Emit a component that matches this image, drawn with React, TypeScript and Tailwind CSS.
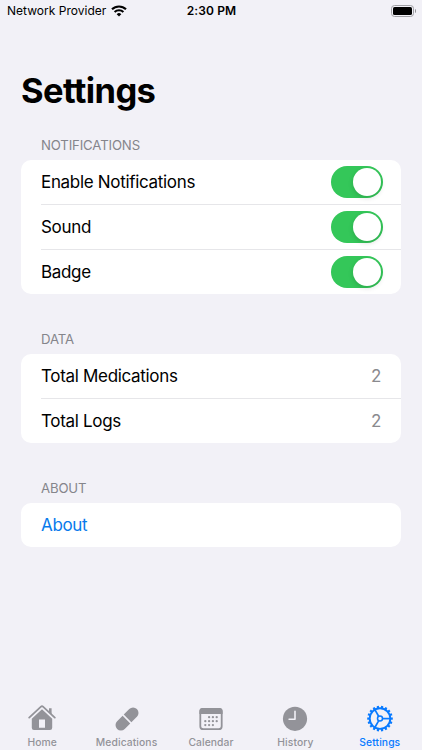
import React from "react";

type SectionProps = {
  title: string;
  className?: string;
  children: React.ReactNode;
};

const Section: React.FC<SectionProps> = ({ title, className = "", children }) => {
  return (
    <section className={className}>
      <h2 className="pl-5 h-[31px] pt-[6px] text-[13.2px] leading-[20px] tracking-[-0.15px] text-[#85858b]">
        {title}
      </h2>
      <div className="rounded-[10px] bg-white pl-5 divide-y divide-[#e6e6e9]">{children}</div>
    </section>
  );
};

type RowProps = {
  label: React.ReactNode;
  children?: React.ReactNode;
};

const Row: React.FC<RowProps> = ({ label, children }) => {
  return (
    <div className="flex h-[45px] items-center justify-between pr-[18px] text-[17px] leading-6 tracking-[-0.32px] text-black last:h-[44px]">
      <span>{label}</span>
      {children}
    </div>
  );
};

const Toggle: React.FC<{ name: string }> = ({ name }) => {
  return (
    <button
      role="switch"
      aria-checked="true"
      aria-label={name}
      className="flex h-8 w-[52px] items-center justify-end rounded-full bg-[#34c759] pr-[2px]"
    >
      <span className="h-7 w-7 rounded-full bg-white shadow-[0_2px_5px_rgba(0,0,0,0.15)]" />
    </button>
  );
};

const HomeIcon = () => (
  <svg width="28" height="28" viewBox="0 0 28 28" fill="none">
    <path d="M1.2 12.6 13 1.7q1-.9 2 0L26.8 12.6" stroke="currentColor" strokeWidth="1.8" strokeLinecap="round" strokeLinejoin="round" />
    <path d="M21 3.3h2.6v6l-2.6-2.4z" fill="currentColor" />
    <path
      d="M14 4.2 24.2 13.7v9a2.2 2.2 0 0 1-2.2 2.2H6a2.2 2.2 0 0 1-2.2-2.2v-9zM11 14.5v8.2h6v-8.2z"
      fill="currentColor"
      fillRule="evenodd"
    />
  </svg>
);

const PillIcon = () => (
  <svg width="28" height="28" viewBox="0 0 28 28" fill="currentColor">
    <g transform="rotate(-45 14 14)">
      <path d="M13.2 8.6v10.8H5.4a5.4 5.4 0 0 1 0-10.8z" />
      <path d="M14.8 8.6h7.8a5.4 5.4 0 0 1 0 10.8h-7.8z" />
    </g>
  </svg>
);

const CalendarIcon = () => (
  <svg width="28" height="28" viewBox="0 0 28 28" fill="none">
    <rect x="3.3" y="4" width="21.4" height="20.2" rx="3" stroke="currentColor" strokeWidth="1.8" />
    <path d="M2.4 9V6a3 3 0 0 1 3-3h17.2a3 3 0 0 1 3 3v3z" fill="currentColor" />
    <g fill="currentColor">
      {[
        [12.1, 12.2], [15.9, 12.2], [19.7, 12.2],
        [8.3, 16.2], [12.1, 16.2], [15.9, 16.2], [19.7, 16.2],
        [8.3, 20.1], [12.1, 20.1], [15.9, 20.1],
      ].map(([x, y]) => (
        <circle key={`${x}-${y}`} cx={x} cy={y} r="1.15" />
      ))}
    </g>
  </svg>
);

const ClockIcon = () => (
  <svg width="28" height="28" viewBox="0 0 28 28" fill="none">
    <circle cx="14" cy="13.8" r="12.1" fill="currentColor" />
    <path d="M14 6.3v7.9H8.1" stroke="#f2f1f7" strokeWidth="1.6" strokeLinecap="round" strokeLinejoin="round" />
  </svg>
);

const GearIcon = () => (
  <svg width="28" height="28" viewBox="0 0 28 28" fill="none" stroke="currentColor">
    <circle cx="14" cy="13.6" r="10.3" strokeWidth="1.9" />
    {/* Teeth */}
    {Array.from({ length: 18 }, (_, i) => (
      <path key={i} d="M14 .8v2.5" strokeWidth="2.2" transform={`rotate(${i * 20 + 10} 14 13.6)`} />
    ))}
    {/* Hub and spokes */}
    <circle cx="14" cy="13.6" r="2.5" strokeWidth="1.5" />
    {[0, 120, 240].map((deg) => (
      <path key={deg} d="M16.7 13.6h7.3" strokeWidth="1.7" transform={`rotate(${deg} 14 13.6)`} />
    ))}
  </svg>
);

const tabs = [
  { label: "Home", icon: <HomeIcon /> },
  { label: "Medications", icon: <PillIcon /> },
  { label: "Calendar", icon: <CalendarIcon /> },
  { label: "History", icon: <ClockIcon /> },
  { label: "Settings", icon: <GearIcon />, active: true },
];

const StatusBar = () => (
  <div className="grid h-[22px] grid-cols-3 items-center pl-[7px] pr-[6px] text-[12px] text-black">
    <div className="flex items-center gap-[5px] whitespace-nowrap">
      <span className="tracking-[0.02px]">Network Provider</span>
      <svg width="16" height="12" viewBox="0 0 16 12" fill="none" stroke="currentColor" strokeWidth="2.1">
        <path d="M1 4.3a10 10 0 0 1 14 0" />
        <path d="M3.6 7a6.3 6.3 0 0 1 8.8 0" />
        <path d="M8 11.5 5.7 9.2a3.3 3.3 0 0 1 4.6 0z" fill="currentColor" stroke="none" />
      </svg>
    </div>
    <span className="text-center font-semibold tracking-[0.1px]">2:30 PM</span>
    <svg className="mb-px justify-self-end" width="25" height="12" viewBox="0 0 25 12" fill="none">
      <rect x=".5" y=".5" width="22" height="11" rx="3" stroke="#a0a0a5" />
      <rect x="2" y="2" width="19" height="8" rx="1.6" fill="#000" />
      <path d="M24 4v4c.8-.4 1-1.1 1-2s-.2-1.6-1-2z" fill="#8e8e93" />
    </svg>
  </div>
);

export default function App() {
  return (
    <div className="flex h-[750px] w-[422px] flex-col bg-[#f2f1f7] font-['Inter','Liberation_Sans',sans-serif]">
      <StatusBar />

      <main className="flex-1 px-[21px]">
        <h1 className="mt-[47px] h-[44px] text-[34.5px] font-bold leading-[44px] tracking-[-0.6px] text-black">
          Settings
        </h1>

        <Section title="NOTIFICATIONS" className="mt-4">
          <Row label="Enable Notifications">
            <Toggle name="Enable Notifications" />
          </Row>
          <Row label="Sound">
            <Toggle name="Sound" />
          </Row>
          <Row label="Badge">
            <Toggle name="Badge" />
          </Row>
        </Section>

        <Section title="DATA" className="mt-[29px]">
          <Row label="Total Medications">
            <span className="pr-[2px] text-[#8a8a8e]">2</span>
          </Row>
          <Row label="Total Logs">
            <span className="pr-[2px] text-[#8a8a8e]">2</span>
          </Row>
        </Section>

        <Section title="ABOUT" className="mt-[29px]">
          <Row label={<a className="text-[#087aec]">About</a>} />
        </Section>
      </main>

      <nav className="grid h-[46px] grid-cols-5">
        {tabs.map((tab) => (
          <button
            key={tab.label}
            className={`flex flex-col items-center pt-px ${tab.active ? "text-[#087aff]" : "text-[#939399]"}`}
          >
            {tab.icon}
            <span className="mt-[3px] text-[10.3px] font-medium leading-[13px] tracking-[0.1px]">{tab.label}</span>
          </button>
        ))}
      </nav>
    </div>
  );
}
